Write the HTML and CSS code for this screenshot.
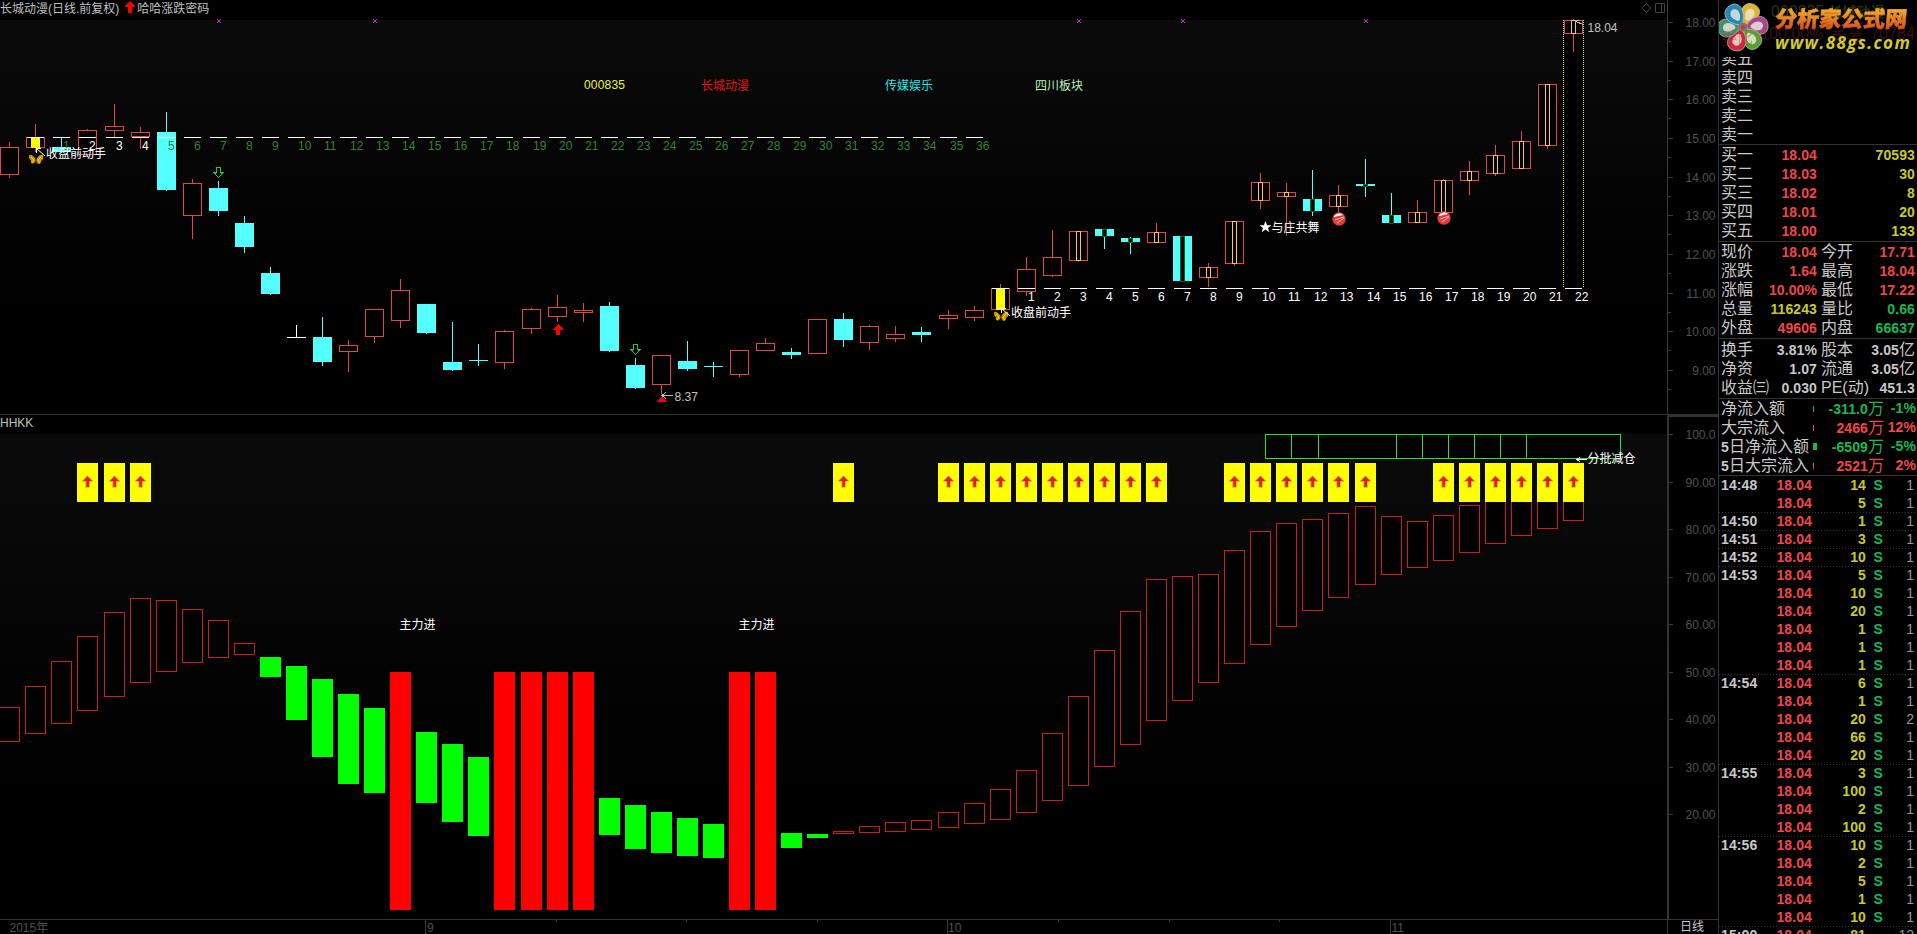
FILE: index.html
```
<!DOCTYPE html>
<html lang="zh-CN">
  <head>
    <meta charset="utf-8" />
    <meta name="viewport" content="width=device-width, initial-scale=1" />
    <title>长城动漫 日线</title>
    <link rel="stylesheet" href="styles.css">
  </head>
  <body>
    <div class="terminal">
      <main class="charts">
        <section class="panel panel-main">
          <div class="panel-body">
            <header class="panel-header">
              <span>长城动漫(日线.前复权)</span>
              <svg class="title-arrow" viewBox="0 0 10 12"><path d="M5 0L10 5V6H7V12H3V6H0V5Z" /></svg>
              <span>哈哈涨跌密码</span>
              <svg class="tools" viewBox="0 0 24 12">
                <path d="M5.5 1.5L10 6L5.5 10.5L1 6ZM14.5 1.5H23.5V10.5H14.5ZM20.5 1.5V10.5" />
              </svg>
            </header>
            <svg class="plot" id="kline" viewBox="0 20 1667 394"></svg>
          </div>
          <svg class="axis" id="priceAxis" viewBox="1667 0 52 414"></svg>
        </section>
        <section class="panel panel-sub">
          <div class="panel-body">
            <header class="panel-header"><span>HHKK</span></header>
            <svg class="plot" id="bars" viewBox="0 434 1667 485"></svg>
          </div>
          <svg class="axis" id="subAxis" viewBox="1667 415 52 504"></svg>
        </section>
        <footer class="time-axis">
          <svg class="plot" id="timeAxis" viewBox="0 920 1667 14"></svg>
          <div class="period">日线</div>
        </footer>
      </main>

      <aside class="quote">
        <div class="watermark">
          <svg class="flower" viewBox="-27 -27 54 54">
            <defs>
              <g id="petal">
                <path d="M-2 -4C-13 -12 -12 -25 -1 -26C11 -27 12 -13 2 -4Z" />
                <path class="shine" d="M-1 -8C-6 -13 -6 -20 0 -21C6 -20 6 -13 1 -8Z" />
              </g>
            </defs>
            <use href="#petal" fill="#e0b331" transform="rotate(28)" />
            <use href="#petal" fill="#a8468f" transform="rotate(86)" />
            <use href="#petal" fill="#5c9f2f" transform="rotate(145)" />
            <use href="#petal" fill="#cc2940" transform="rotate(204)" />
            <use href="#petal" fill="#488b70" transform="rotate(268)" />
            <use href="#petal" fill="#2487bc" transform="rotate(328)" />
            <circle r="4.5" fill="#8a6e60" />
            <circle r="2" fill="#c7382c" />
          </svg>
          <div class="ghost ghost-name"><i>000835</i><b>长城动漫</b></div>
          <div class="ghost ghost-ratio"><span>委比</span><span>100.00%</span><span>委差</span><span>70784</span></div>
          <div class="brand">
            <strong>分析家公式网</strong>
            <em>www.88gs.com</em>
          </div>
        </div>
        <div class="block asks" id="asks"></div>
        <div class="block" id="bids"></div>
        <div class="block" id="prices"></div>
        <div class="block" id="basics"></div>
        <div class="block flows" id="flows"></div>
        <div class="ticks" id="ticks"></div>
      </aside>
    </div>
    <script src="chart.js"></script>
  </body>
</html>
```
FILE: styles.css
```
html,
body,
div {
  margin: 0;
  padding: 0;
  box-sizing: border-box;
}

body {
  background-color: #000;
  color: #c8c8c8;
  font-family: "Liberation Sans", "Noto Sans CJK SC", sans-serif;
  font-size: 12px;
  overflow: hidden;
}

.terminal {
  display: grid;
  grid-template-columns: 1718px 199px;
  height: 934px;
}

/* charts */
.charts {
  display: grid;
  grid-template-rows: 415px 505px 14px;
  min-width: 0;
  overflow: hidden;
}
.panel {
  display: grid;
  grid-template-columns: 1667px 52px;
  border-bottom: 1px solid #333;
}
.panel-body {
  display: flex;
  flex-direction: column;
}
.panel-header {
  display: flex;
  flex: none;
  height: 20px;
  line-height: 19px;
  color: #c0c0c0;
}
.panel-sub .panel-header {
  height: 19px;
  line-height: 17px;
}
.title-arrow {
  width: 10px;
  height: 12px;
  margin: 1px 2px 0 6px;
  fill: #f00;
}
.tools {
  width: 24px;
  height: 12px;
  margin: 2px 2px 0 auto;
  fill: none;
  stroke: #444;
}
.plot {
  display: block;
  width: 1667px;
  overflow: visible;
  shape-rendering: crispEdges;
}
.panel .plot {
  background: linear-gradient(#0a0a0a, #000 75%);
}
.panel-main .plot {
  height: 394px;
}
.panel-sub .plot {
  height: 485px;
}
.axis {
  display: block;
  width: 52px;
  height: 414px;
  shape-rendering: crispEdges;
}
.panel-sub .axis {
  height: 504px;
}
.time-axis {
  display: grid;
  grid-template-columns: 1667px 51px;
  overflow: hidden;
}
.time-axis .plot {
  height: 14px;
}
.period {
  border-left: 1px solid #333;
  padding-left: 12px;
  line-height: 15px;
}
.smooth {
  shape-rendering: auto;
}
svg text {
  font-size: 12px;
  fill: #fff;
}
svg text.dim {
  fill: #505050;
}
svg text.mark {
  fill: #c0c0c0;
}

/* quote board */
.quote {
  position: relative;
  border-left: 1px solid #333;
  overflow: hidden;
  font-size: 16px;
}
.quote b {
  font-size: 14px;
  letter-spacing: 0.1px;
}
.watermark {
  position: absolute;
  top: 0;
  left: 0;
  width: 100%;
  height: 57px;
  background: #000;
}
.flower {
  position: absolute;
  left: -3px;
  top: 1px;
  width: 54px;
  height: 52px;
}
.flower use {
  stroke: #b7bda8;
  stroke-width: 0.8;
}
.flower .shine {
  fill: #e5e6d9;
  opacity: 0.85;
  stroke: none;
}
.ghost {
  position: absolute;
  opacity: 0.35;
  white-space: nowrap;
}
.ghost-name {
  top: 1px;
  left: 52px;
  color: #8c8b20;
}
.ghost-name i {
  font-style: normal;
  margin-right: 4px;
}
.ghost-ratio {
  top: 25px;
  left: 2px;
  right: 2px;
  display: flex;
  justify-content: space-between;
  color: #a03030;
}
.brand {
  position: absolute;
  left: 56px;
  top: 5px;
  width: 140px;
}
.brand strong {
  display: block;
  font-size: 22px;
  line-height: 30px;
  font-weight: 900;
  white-space: nowrap;
  transform: skewX(-5deg);
  background: linear-gradient(#efa629 20%, #d94d20 80%);
  -webkit-background-clip: text;
  background-clip: text;
  -webkit-text-stroke: 0.6px transparent;
  color: transparent;
}
.brand em {
  display: block;
  font: italic bold 17px/22px "Open Sans", sans-serif;
  letter-spacing: 1.4px;
  color: #d3c92d;
  margin-top: -3px;
}

.block {
  padding-bottom: 1px;
  border-bottom: 1px solid #333;
}
.asks {
  padding: 49px 0 0;
}
#basics {
  padding-top: 1px;
}
.line {
  display: grid;
  grid-template-columns: 96px 102px;
  height: 19px;
  line-height: 19px;
  padding-left: 2px;
  white-space: nowrap;
}
.cell {
  display: flex;
  justify-content: space-between;
}
.cell + .cell {
  padding: 0 4px 0 4px;
}
.flows {
  padding-bottom: 0;
}
.flow {
  display: grid;
  grid-template-columns: 92px 3px 68px 32px;
  align-items: center;
  height: 19px;
  line-height: 19px;
  padding-left: 2px;
  white-space: nowrap;
}
.flow > * {
  height: 19px;
  text-align: right;
}
.flow > :first-child {
  text-align: left;
}
.flow .bar {
  width: 1px;
  height: 6px;
  background: currentColor;
}
.flow .bar.big {
  width: 4px;
  height: 7px;
}
.red {
  color: #f04848;
}
.green {
  color: #18b858;
}
.yellow {
  color: #c8c828;
}
.white {
  color: #c8c8c8;
}

.tick {
  display: grid;
  grid-template-columns: 40px 51px 54px 17px 31px;
  height: 18px;
  line-height: 18px;
  padding-left: 2px;
  text-align: right;
  font-size: 14px;
  color: #999;
}
.tick.first {
  background: repeating-linear-gradient(90deg, #333 0 1px, transparent 1px 3px) top / 100% 1px no-repeat;
}
.tick :first-child {
  text-align: left;
}
```
FILE: chart.js
```
const RED = "#e04848";
const CYAN = "#54ffff";

// x of the middle of candle i
function cx(i) {
  return 9 + 26 * i + Math.floor((i + 12) / 16);
}

// y in the lower panel, stretched to the panel height
function sy(y) {
  return Math.round(434 + (y - 434) * 1.0026);
}

function rect(x, y, w, h, fill) {
  return `<rect x="${x}" y="${y}" width="${w}" height="${h}" fill="${fill}" />`;
}

function box(x1, y1, x2, y2, color, fill = "#000") {
  return `<rect x="${x1 + 0.5}" y="${y1 + 0.5}" width="${x2 - x1}" height="${y2 - y1}" fill="${fill}" stroke="${color}" />`;
}

function text(x, y, str, attrs = "") {
  return `<text x="${x}" y="${y}" ${attrs}>${str}</text>`;
}

// kind, high, body top, body bottom, low
const candles = [
  ["r", 142, 147, 174, 178], ["r", 124, 137, 147, 152], ["c", 137, 147, 151, 153],
  ["r", 129, 130, 154, 154], ["r", 104, 126, 130, 137], ["r", 127, 132, 136, 149],
  ["c", 112, 132, 189, 191], ["r", 179, 183, 215, 239], ["c", 181, 188, 210, 216],
  ["c", 216, 223, 246, 253], ["c", 267, 273, 293, 295], ["w", 325, 337, 337, 337],
  ["c", 317, 337, 361, 366], ["r", 340, 345, 351, 372], ["r", 309, 309, 336, 343],
  ["r", 279, 290, 320, 328], ["c", 304, 304, 332, 334], ["c", 322, 362, 369, 371],
  ["c", 344, 360, 360, 366], ["r", 330, 331, 362, 369], ["r", 308, 309, 328, 334],
  ["r", 295, 307, 316, 322], ["r", 303, 310, 312, 322], ["c", 302, 306, 350, 352],
  ["c", 358, 365, 387, 389], ["r", 355, 355, 384, 394], ["c", 341, 361, 368, 371],
  ["c", 362, 366, 366, 377], ["r", 350, 350, 374, 377], ["r", 338, 343, 350, 350],
  ["c", 348, 352, 354, 359], ["r", 319, 319, 353, 353], ["c", 313, 319, 339, 347],
  ["r", 325, 326, 342, 350], ["r", 326, 334, 338, 342], ["c", 327, 332, 334, 342],
  ["r", 310, 315, 318, 329], ["r", 306, 310, 317, 321], ["r", 284, 288, 309, 309],
  ["r", 257, 269, 291, 296], ["r", 230, 257, 275, 277], ["r", 231, 231, 260, 262],
  ["c", 229, 229, 235, 249], ["c", 237, 238, 241, 254], ["r", 223, 232, 242, 242],
  ["c", 236, 236, 280, 281], ["r", 263, 267, 277, 287], ["r", 221, 221, 263, 266],
  ["r", 173, 182, 200, 209], ["r", 183, 192, 196, 236], ["c", 170, 199, 210, 216],
  ["r", 185, 195, 206, 212], ["c", 159, 184, 185, 197], ["c", 193, 215, 222, 223],
  ["r", 200, 212, 222, 222], ["r", 179, 180, 212, 212], ["r", 161, 171, 180, 195],
  ["r", 145, 155, 173, 176], ["r", 131, 141, 168, 168], ["r", 84, 84, 145, 149],
  ["r", 19, 20, 33, 52],
];

function drawCandle(c, i) {
  const [kind, high, top, bottom, low] = c;
  const x = cx(i);
  const color = { r: RED, c: CYAN, w: "#fff" }[kind];
  let out = rect(x, high, 1, low - high, color);
  if (kind == "r") {
    out += box(x - 9, top, x + 9, bottom, RED);
  } else {
    out += rect(x - 9, top, 19, bottom - top + 1, color);
  }
  // narrow inner candle from the 41st bar on
  if (i > 40) {
    out += box(x - 2, top, x + 2, kind == "r" ? bottom : bottom + 1, kind == "r" ? "#ffc840" : "#086818");
  }
  return out;
}

function butterfly(x, y) {
  return `<g class="smooth" transform="translate(${x} ${y})">
    <path d="M0 1C-3 -5 -7 -5 -7 -3C-7 0 -6 1 -5 1C-6 4 -4 6 -1 3L0 1C1 6 5 6 5 2C7 1 8 -1 7 -4C5 -5 2 -4 0 1Z" fill="#c89808" />
    <path d="M-5 -2L-2 1L-4 4M5 -2L2 1L4 4" stroke="#f0d020" fill="none" />
    <path d="M0 -2V5" stroke="#4a3000" />
  </g>`;
}

function upArrow(x, y) {
  return `<path d="M${x} ${y}l5 5v1h-3v5h-4v-5h-3v-1z" fill="#f00" />`;
}

function downArrow(x, y) {
  return `<path d="M${x - 1.5} ${y + 0.5}h4v5h2.500l-4.500 5l-4.500 -5h2.500z" fill="none" stroke="#28c828" />`;
}

function ball(x, y) {
  return `<g class="smooth"><circle cx="${x}" cy="${y}" r="6.700" fill="#e03c3c" />
    <path d="M${x - 5} ${y - 3}q5 -5 9 -1l-9 2z" fill="#fff" />
    <path d="M${x - 4} ${y + 1}l9 -3M${x - 2} ${y + 4}l7 -5" fill="none" stroke="#ffb0a8" /></g>`;
}

function pointer(x, y) {
  return `<path class="smooth" d="M${x + 9} ${y + 8}L${x + 0.5} ${y + 0.5}M${x + 5} ${y + 0.5}H${x + 0.5}V${y + 5}" fill="none" stroke="#fff" />`;
}

function drawKline() {
  let out = rect(1563, 20, 21, 268, "#000");
  out += candles.map(drawCandle).join("");
  out += rect(31, 137, 9, 11, "#ff0") + rect(996, 288, 9, 22, "#ff0");
  for (let i = 1; i < 38; i++) {
    out += rect(cx(i) - 8, 137, 17, 1, "#fff");
    if (i > 1) {
      const white = i > 2 && i < 6;
      out += text(cx(i) + 2, 150, i - 1, white ? "" : 'style="fill:#388038"');
    }
  }
  for (let i = 38; i < 61; i++) {
    out += rect(cx(i) - 8, 288, 17, 1, "#fff");
    if (i > 38) out += text(cx(i) + 2, 301, i - 38);
  }
  [218, 374, 1078, 1182, 1365].forEach((x) => {
    out += `<path class="smooth" d="M${x - 1} 19l4 4m0 -4l-4 4" stroke="#c030c0" />`;
  });
  out += `<path d="M1563.500 20V288M1583.500 20V288" stroke="#d8f080" stroke-dasharray="1 1" />`;
  out += downArrow(218, 167) + downArrow(635, 344) + upArrow(558, 324);
  out += `<path d="M662 396l5 6h-10z" fill="#f00" />`;
  out += `<path d="M662 395.500H673M666 392.500l-4 3l4 3M1575 21l9 4M1579 20.500h-4v4" fill="none" stroke="#c0c0c0" />`;
  out += text(674.5, 401, "8.37", 'class="mark"') + text(1587.5, 32, "18.04", 'class="mark"');
  out += butterfly(36, 159) + butterfly(1001, 316);
  out += pointer(36, 148) + pointer(1001, 308);
  out += text(46, 158, "收盘前动手") + text(1011, 317, "收盘前动手");
  out += ball(1339, 219) + ball(1444, 218);
  out += `<path class="smooth" d="M1265.500 221l1.600 4.200h4.400l-3.500 2.700l1.300 4.300l-3.800 -2.600l-3.800 2.600l1.300 -4.300l-3.500 -2.700h4.400z" fill="#fff" />`;
  out += text(1271.5, 232, "与庄共舞");
  out += text(584, 89, "000835", 'style="fill:#f0f040;letter-spacing:.2px"');
  out += text(701, 90, "长城动漫", 'style="fill:#e81818"');
  out += text(885, 90, "传媒娱乐", 'style="fill:#20e8e8"');
  out += text(1035, 90, "四川板块", 'style="fill:#b8f0b8"');
  document.getElementById("kline").innerHTML = out;
}

// kind, top, bottom
const bars = [
  ["r", 706, 740], ["r", 685, 732], ["r", 660, 722], ["r", 635, 709], ["r", 612, 695],
  ["r", 598, 681], ["r", 600, 670], ["r", 609, 661], ["r", 620, 656], ["r", 642, 653],
  ["g", 656, 676], ["g", 665, 719], ["g", 678, 756], ["g", 693, 783], ["g", 707, 792],
  ["R"], ["g", 731, 802], ["g", 743, 821], ["g", 756, 835], ["R"], ["R"], ["R"], ["R"],
  ["g", 797, 834], ["g", 804, 848], ["g", 811, 852], ["g", 817, 855], ["g", 823, 857],
  ["R"], ["R"], ["g", 832, 847], ["g", 833, 837],
  ["r", 830, 832], ["r", 825, 831], ["r", 821, 830], ["r", 819, 828], ["r", 811, 826],
  ["r", 802, 822], ["r", 788, 818], ["r", 769, 811], ["r", 732, 799], ["r", 695, 784],
  ["r", 649, 765], ["r", 611, 743], ["r", 579, 719], ["r", 576, 699], ["r", 574, 681],
  ["r", 550, 662], ["r", 531, 643], ["r", 523, 626], ["r", 519, 610], ["r", 513, 597],
  ["r", 506, 584], ["r", 516, 574], ["r", 521, 567], ["r", 515, 560], ["r", 505, 552],
  ["r", 495, 543], ["r", 490, 535], ["r", 485, 528], ["r", 480, 520],
];

const signals = [3, 4, 5, 32, 36, 37, 38, 39, 40, 41, 42, 43, 44, 47, 48, 49, 50, 51, 52, 55, 56, 57, 58, 59, 60];

function drawBars() {
  let out = bars
    .map(([kind, top, bottom], i) => {
      const x = cx(i) - 10;
      if (kind == "R") return rect(x, 672, 21, 238, "#f00");
      if (kind == "g") return rect(x, sy(top), 21, sy(bottom) - sy(top), "#0f0");
      return box(x, sy(top), x + 20, sy(bottom), "#c81e1e");
    })
    .join("");
  signals.forEach((i) => {
    const x = cx(i);
    out += rect(x - 10, 463, 21, 39, "#ff0");
    out += `<path class="smooth" d="M${x + 0.5} 475.500l6 6h-4v6h-4v-6h-4z" fill="#b88858" />`;
    out += `<path class="smooth" d="M${x + 0.5} 476.500l4.500 4.500h-3v6h-2.500v-6h-3.500z" fill="#f01818" />`;
  });
  out += box(1265, 434, 1620, 458, "#30e030");
  [1291, 1318, 1396, 1422, 1448, 1474, 1500, 1526].forEach((x) => {
    out += rect(x, 434, 1, 24, "#30e030");
  });
  out += `<path d="M1577 459.500h10M1580 457l-3 2.500l3 2.500" fill="none" stroke="#fff" />`;
  out += text(1587.5, 463, "分批减仓");
  out += text(399.5, 629, "主力进") + text(738.5, 629, "主力进");
  document.getElementById("bars").innerHTML = out;
}

function drawAxes() {
  let out = rect(1667, 0, 1, 414, "#3a3a3a");
  for (let p = 0; p < 10; p++) {
    const y = Math.round(22 + p * 38.65);
    out += rect(1668, y, 5, 1, "#3a3a3a") + rect(1668, y + 19, 3, 1, "#3a3a3a");
    out += text(1715.5, y + 5, (18 - p).toFixed(2), 'text-anchor="end" class="dim"');
  }
  document.getElementById("priceAxis").innerHTML = out;

  out = `<path d="M1668 919V416H1719" fill="none" stroke="#333" stroke-width="2" />`;
  for (let v = 100; v >= 20; v -= 10) {
    const y = Math.round(434 + (100 - v) * 4.75);
    out += rect(1669, y, 4, 1, "#3a3a3a");
    out += text(1715.5, y + 5, v == 100 ? "100.0" : v.toFixed(2), 'text-anchor="end" class="dim"');
  }
  document.getElementById("subAxis").innerHTML = out;

  out = [425, 947, 1390].map((x) => rect(x, 920, 1, 14, "#3a3a3a")).join("");
  out += [556, 686, 817, 1058, 1169, 1279].map((x) => rect(x, 920, 1, 2, "#3a3a3a")).join("");
  out += text(9.5, 932, "2015年", 'class="dim"') + text(427, 932, "9", 'class="dim"');
  out += text(948, 932, "10", 'class="dim"') + text(1391.5, 932, "11", 'class="dim"');
  document.getElementById("timeAxis").innerHTML = out;
}

function cell(label, value, color) {
  // 亿 keeps the regular label size
  const v = value.replace("亿", "</b>亿<b>");
  return `<div class="cell"><span>${label}</span><span class="${color}"><b>${v}</b></span></div>`;
}

function fillLines(id, rows) {
  document.getElementById(id).innerHTML = rows
    .map((r) => `<div class="line">${cell(r[0], r[1], r[2])}${cell(r[3], r[4], r[5])}</div>`)
    .join("");
}

function fillQuote() {
  fillLines("asks", ["五", "四", "三", "二", "一"].map((n) => ["卖" + n, "", "", "", "", ""]));
  fillLines("bids", [
    ["买一", "18.04", "red", "", "70593", "yellow"],
    ["买二", "18.03", "red", "", "30", "yellow"],
    ["买三", "18.02", "red", "", "8", "yellow"],
    ["买四", "18.01", "red", "", "20", "yellow"],
    ["买五", "18.00", "red", "", "133", "yellow"],
  ]);
  fillLines("prices", [
    ["现价", "18.04", "red", "今开", "17.71", "red"],
    ["涨跌", "1.64", "red", "最高", "18.04", "red"],
    ["涨幅", "10.00%", "red", "最低", "17.22", "red"],
    ["总量", "116243", "yellow", "量比", "0.66", "green"],
    ["外盘", "49606", "red", "内盘", "66637", "green"],
  ]);
  fillLines("basics", [
    ["换手", "3.81%", "white", "股本", "3.05亿", "white"],
    ["净资", "1.07", "white", "流通", "3.05亿", "white"],
    ["收益㈢", "0.030", "white", "PE(动)", "451.3", "white"],
  ]);
  const flows = [
    ["净流入额", "-311.0", "-1%", "green", ""],
    ["大宗流入", "2466", "12%", "red", ""],
    ["<b>5</b>日净流入额", "-6509", "-5%", "green", "big"],
    ["<b>5</b>日大宗流入", "2521", "2%", "red", ""],
  ];
  document.getElementById("flows").innerHTML = flows
    .map(
      ([label, v, pct, color, big]) =>
        `<div class="flow"><span>${label}</span><i class="bar ${color} ${big}"></i>` +
        `<span class="${color}"><b>${v}</b>万</span><b class="${color}">${pct}</b></div>`
    )
    .join("");

  const ticks = [
    ["14:48", 14], ["", 5], ["14:50", 1], ["14:51", 3], ["14:52", 10], ["14:53", 5],
    ["", 10], ["", 20], ["", 1], ["", 1], ["", 1], ["14:54", 6], ["", 1], ["", 20, 2],
    ["", 66], ["", 20], ["14:55", 3], ["", 100], ["", 2], ["", 100], ["14:56", 10],
    ["", 2], ["", 5], ["", 1], ["", 10], ["15:00", 81, 12],
  ];
  document.getElementById("ticks").innerHTML = ticks
    .map(
      ([time, vol, n = 1], i) =>
        `<div class="tick ${time && i ? "first" : ""}"><b class="white">${time}</b><b class="red">18.04</b>` +
        `<b class="yellow">${vol}</b><b class="green">${i == 25 ? "" : "S"}</b><span>${n}</span></div>`
    )
    .join("");
}

drawKline();
drawBars();
drawAxes();
fillQuote();
```
